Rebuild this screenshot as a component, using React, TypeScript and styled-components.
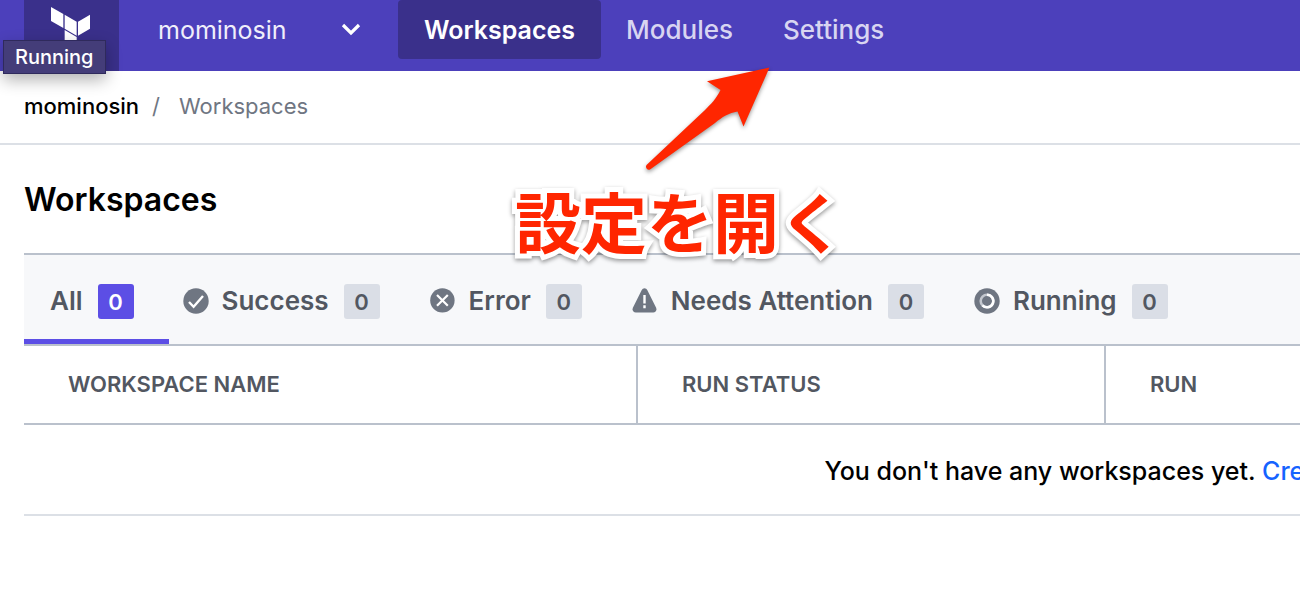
import React from 'react';
import styled, { createGlobalStyle } from 'styled-components';

const GlobalStyle = createGlobalStyle`
  * { box-sizing: border-box; }
  body {
    margin: 0;
    background: #fff;
    color: #000;
    font-family: Inter, "Liberation Sans", sans-serif;
    overflow-x: hidden;
  }
`;

const Page = styled.div`
  position: relative;
  overflow: hidden;
  min-height: 100vh;
`;

const TopBar = styled.header`
  display: flex;
  align-items: flex-start;
  height: 71px;
  padding-left: 24px;
  background: #4c40bb;
`;

const LogoLink = styled.a`
  position: relative;
  display: flex;
  width: 95px;
  height: 71px;
  padding: 7px 0 0 27px;
  background: #3a308b;
`;

const Tooltip = styled.span`
  position: absolute;
  top: 40px;
  left: -21px;
  padding: 0 11px;
  border: 1px solid #5a5488;
  outline: 1px solid #2f2a5c;
  outline-offset: -1px;
  background: #443d79;
  box-shadow: 0 6px 16px rgba(0, 0, 0, 0.3);
  color: #fff;
  font-size: 20px;
  font-weight: 500;
  line-height: 32px;
  white-space: nowrap;
`;

const OrgButton = styled.button`
  display: flex;
  align-items: center;
  justify-content: space-between;
  width: 279px;
  height: 59px;
  padding: 0 37px 0 39px;
  border: 0;
  background: none;
  color: #f0effa;
  font: 400 25px/30px Inter, "Liberation Sans", sans-serif;
`;

const Nav = styled.nav`
  display: flex;
`;

const NavLink = styled.a<{ $active?: boolean }>`
  height: 59px;
  padding: 0 26px;
  border-radius: 4px;
  background: ${p => (p.$active ? '#3a308b' : 'transparent')};
  color: ${p => (p.$active ? '#fff' : '#d8d5f1')};
  font-size: ${p => (p.$active ? '25px' : '26px')};
  font-weight: ${p => (p.$active ? 600 : 500)};
  line-height: 60px;
  text-decoration: none;

  & + & {
    padding: 0 25px;
  }
`;

const Breadcrumb = styled.nav`
  display: flex;
  align-items: center;
  height: 74px;
  padding: 0 24px 2px;
  border-bottom: 2px solid #dce0e6;
  color: #6f7682;
  font-size: 22px;
  line-height: 28px;
`;

const CrumbLink = styled.a`
  color: #000;
  font-weight: 500;
  text-decoration: none;
`;

const Slash = styled.span`
  margin: 0 19px 0 13px;
`;

const Main = styled.main`
  padding-left: 24px;
`;

const Title = styled.h1`
  margin: 0;
  padding: 35px 0 33px;
  font-size: 32px;
  font-weight: 600;
  line-height: 40px;
`;

const Tabs = styled.div`
  display: flex;
  height: 93px;
  border-top: 2px solid #bac1cc;
  border-bottom: 2px solid #bac1cc;
  background: #f7f8fa;
`;

const Tab = styled.button<{ $active?: boolean }>`
  display: flex;
  align-items: center;
  flex: none;
  padding: ${p => (p.$active ? '8px 35px 0 26px' : '8px 36px 0 14px')};
  border: 0;
  border-bottom: 5px solid ${p => (p.$active ? '#5c4ee5' : 'transparent')};
  background: none;
  color: #525761;
  font: 600 26px/30px Inter, "Liberation Sans", sans-serif;
`;

const TabIcon = styled.svg`
  width: 26px;
  height: 26px;
  margin-right: 13px;
`;

const Count = styled.span<{ $active?: boolean }>`
  width: 36px;
  height: 35px;
  margin-left: 15px;
  border-radius: 3px;
  background: ${p => (p.$active ? '#5c4ee5' : '#dadee6')};
  color: ${p => (p.$active ? '#fff' : '#525761')};
  font-size: 22px;
  line-height: 36px;
  text-align: center;
`;

const TableClip = styled.div`
  overflow: hidden;
`;

const Table = styled.table`
  width: 166%;
  border-collapse: separate;
  border-spacing: 0;
  table-layout: fixed;
`;

const HeadCell = styled.th<{ $width?: number }>`
  width: ${p => (p.$width ? `${p.$width}px` : 'auto')};
  height: 79px;
  padding: 0 44px 2px;
  border-right: 2px solid #bac1cc;
  border-bottom: 2px solid #bac1cc;
  color: #525761;
  font-size: 22px;
  font-weight: 600;
  line-height: 28px;
  text-align: left;
`;

const EmptyCell = styled.td`
  height: 91px;
  padding: 2px 0 0;
  border-bottom: 2px solid #dce0e6;
  font-size: 25px;
  font-weight: 500;
  line-height: 30px;
  text-align: center;
`;

const CreateLink = styled.a`
  color: #1563ff;
  text-decoration: none;
`;

const Callout = styled.div`
  position: absolute;
  top: 173px;
  left: 515px;
  color: #ff2600;
  font-family: "Noto Sans CJK JP", sans-serif;
  font-size: 66px;
  font-weight: 700;
  line-height: 92px;
  white-space: nowrap;
  -webkit-text-stroke: 10px #fff;
  stroke-linejoin: round;
  paint-order: stroke fill;
  filter: drop-shadow(0 2px 2px rgba(0, 0, 0, 0.4));
`;

const Arrow = styled.svg`
  position: absolute;
  top: 60px;
  left: 640px;
  filter: drop-shadow(0 2px 2px rgba(0, 0, 0, 0.4));
`;

const SuccessIcon = () => (
  <TabIcon viewBox="0 0 26 26" aria-hidden="true">
    <circle cx="13" cy="13" r="12.7" fill="#6f7682" />
    <path d="M6 14l4.6 4.8L20 8" fill="none" stroke="#fff" strokeWidth="2.4" />
  </TabIcon>
);

const ErrorIcon = () => (
  <TabIcon viewBox="0 0 26 26" aria-hidden="true">
    <circle cx="12.4" cy="12.4" r="12.2" fill="#6f7682" />
    <path d="M7 7l10.8 10.8M17.8 7L7 17.8" fill="none" stroke="#fff" strokeWidth="2.2" />
  </TabIcon>
);

const WarningIcon = () => (
  <TabIcon viewBox="0 0 26 26" aria-hidden="true">
    <path d="M9.5 2.4C11 -.4 14 -.4 15.500 2.4L24 19.500C25.200 22 23.800 24.500 21.200 24.500H3.800C1.200 24.500 -.2 22 1 19.500Z" fill="#6f7682" />
    <path d="M12.500 7v8.5M12.500 17.200v3" stroke="#fff" strokeWidth="2.4" />
  </TabIcon>
);

const RunningIcon = () => (
  <TabIcon viewBox="0 0 26 26" aria-hidden="true">
    <circle cx="13" cy="13" r="12.7" fill="#6f7682" />
    <circle cx="13" cy="13" r="6.3" fill="none" stroke="#c3c7ce" strokeWidth="2.6" />
    <path d="M13 6.700a6.300 6.300 0 1 1-4.500 10.700" fill="none" stroke="#fff" strokeWidth="2.6" />
  </TabIcon>
);

const tabs = [
  { label: 'All', Icon: null },
  { label: 'Success', Icon: SuccessIcon },
  { label: 'Error', Icon: ErrorIcon },
  { label: 'Needs Attention', Icon: WarningIcon },
  { label: 'Running', Icon: RunningIcon },
];

export default function App() {
  return (
    <Page>
      <GlobalStyle />
      <TopBar>
        <LogoLink href="#" aria-label="Home">
          <svg width="39" height="44" viewBox="0 0 117 132" fill="#fff" aria-hidden="true">
            <path d="M0 0l37 21v42L0 42zM41 23l36 21v42L41 65zM81 44l36-21v42L81 86zM41 69l36 21v42l-36-21z" />
          </svg>
          <Tooltip role="tooltip">Running</Tooltip>
        </LogoLink>
        <OrgButton type="button">
          mominosin
          <svg width="20" height="14" viewBox="0 0 20 14" aria-hidden="true">
            <path d="M2 2l8 8 8-8" fill="none" stroke="#fff" strokeWidth="3.2" />
          </svg>
        </OrgButton>
        <Nav>
          <NavLink href="#workspaces" $active>Workspaces</NavLink>
          <NavLink href="#modules">Modules</NavLink>
          <NavLink href="#settings">Settings</NavLink>
        </Nav>
      </TopBar>
      <Breadcrumb aria-label="Breadcrumb">
        <CrumbLink href="#">mominosin</CrumbLink>
        <Slash>/</Slash>
        <span>Workspaces</span>
      </Breadcrumb>
      <Main>
        <Title>Workspaces</Title>
        <Tabs>
          {tabs.map(({ label, Icon }, i) => (
            <Tab key={label} type="button" $active={i === 0}>
              {Icon && <Icon />}
              {label}
              <Count $active={i === 0}>0</Count>
            </Tab>
          ))}
        </Tabs>
        <TableClip>
          <Table>
            <thead>
              <tr>
                <HeadCell $width={614}>WORKSPACE NAME</HeadCell>
                <HeadCell $width={468}>RUN STATUS</HeadCell>
                <HeadCell>RUN</HeadCell>
              </tr>
            </thead>
            <tbody>
              <tr>
                <EmptyCell colSpan={3}>
                  You don't have any workspaces yet. <CreateLink href="#create">Create</CreateLink>
                </EmptyCell>
              </tr>
            </tbody>
          </Table>
        </TableClip>
      </Main>
      <Arrow width="136" height="116" viewBox="0 0 136 116" aria-hidden="true">
        <path d="M129.500 7.500L67 21.300L80.500 30C76 39 71 44 65 50L6.500 105C5 107.500 7 110.500 10 109.500L75 63C82 57 89 53 97.500 51.500L103.500 66.500Z" fill="#ff2600" />
      </Arrow>
      <Callout>設定を開く</Callout>
    </Page>
  );
}
